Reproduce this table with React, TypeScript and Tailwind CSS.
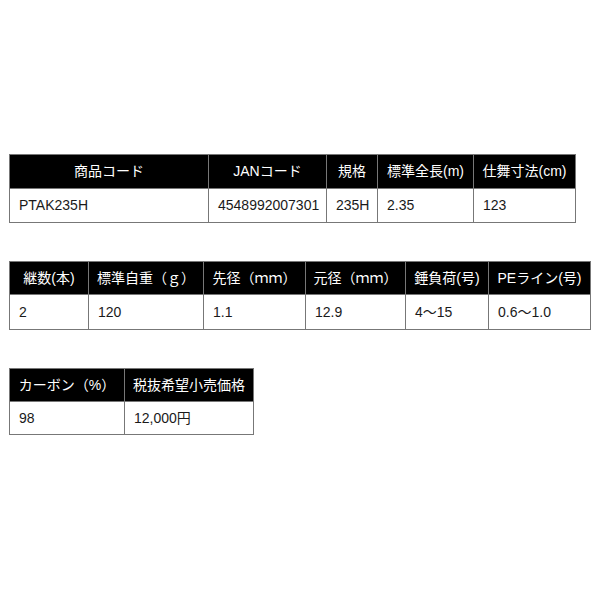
import React from "react";

type Spec = { widths: number[]; head: string[]; body: string[]; rowH: [string, string] };

const tables: Spec[] = [
  {
    widths: [199, 118, 51, 96, 102],
    head: ["商品コード", "JANコード", "規格", "標準全長(m)", "仕舞寸法(cm)"],
    body: ["PTAK235H", "4548992007301", "235H", "2.35", "123"],
    rowH: ["h-[34px]", "h-[34px]"],
  },
  {
    widths: [79, 115, 102, 100, 83, 102],
    head: ["継数(本)", "標準自重（ｇ）", "先径（ｍｍ）", "元径（ｍｍ）", "錘負荷(号)", "PEライン(号)"],
    body: ["2", "120", "1.1", "12.9", "4〜15", "0.6〜1.0"],
    rowH: ["h-[33px]", "h-[35px]"],
  },
  {
    widths: [115, 129],
    head: ["カーボン（%）", "税抜希望小売価格"],
    body: ["98", "12,000円"],
    rowH: ["h-[33px]", "h-[33px]"],
  },
];

function SpecTable({ spec }: { spec: Spec }) {
  const total = spec.widths.reduce((a, b) => a + b, 0);
  return (
    <table className="border-collapse table-fixed" style={{ width: total }}>
      <colgroup>
        {spec.widths.map((w, i) => (
          <col key={i} style={{ width: w }} />
        ))}
      </colgroup>
      <thead>
        <tr className={spec.rowH[0]}>
          {spec.head.map((h, i) => (
            <th
              key={i}
              className="border border-[#777] bg-black text-white font-normal text-center px-0 whitespace-nowrap"
            >
              {h}
            </th>
          ))}
        </tr>
      </thead>
      <tbody>
        <tr className={spec.rowH[1]}>
          {spec.body.map((b, i) => (
            <td key={i} className="border border-[#777] bg-white text-[#1a1a1a] text-left px-[9px] whitespace-nowrap">
              {b}
            </td>
          ))}
        </tr>
      </tbody>
    </table>
  );
}

export default function App() {
  return (
    <div
      className="w-[600px] h-[600px] bg-white pl-[9px] pt-[154px] flex flex-col items-start gap-[38px] text-[14px]"
      style={{ fontFamily: '"Liberation Sans", "Noto Sans CJK JP", sans-serif' }}
    >
      {tables.map((t, i) => (
        <SpecTable key={i} spec={t} />
      ))}
    </div>
  );
}
